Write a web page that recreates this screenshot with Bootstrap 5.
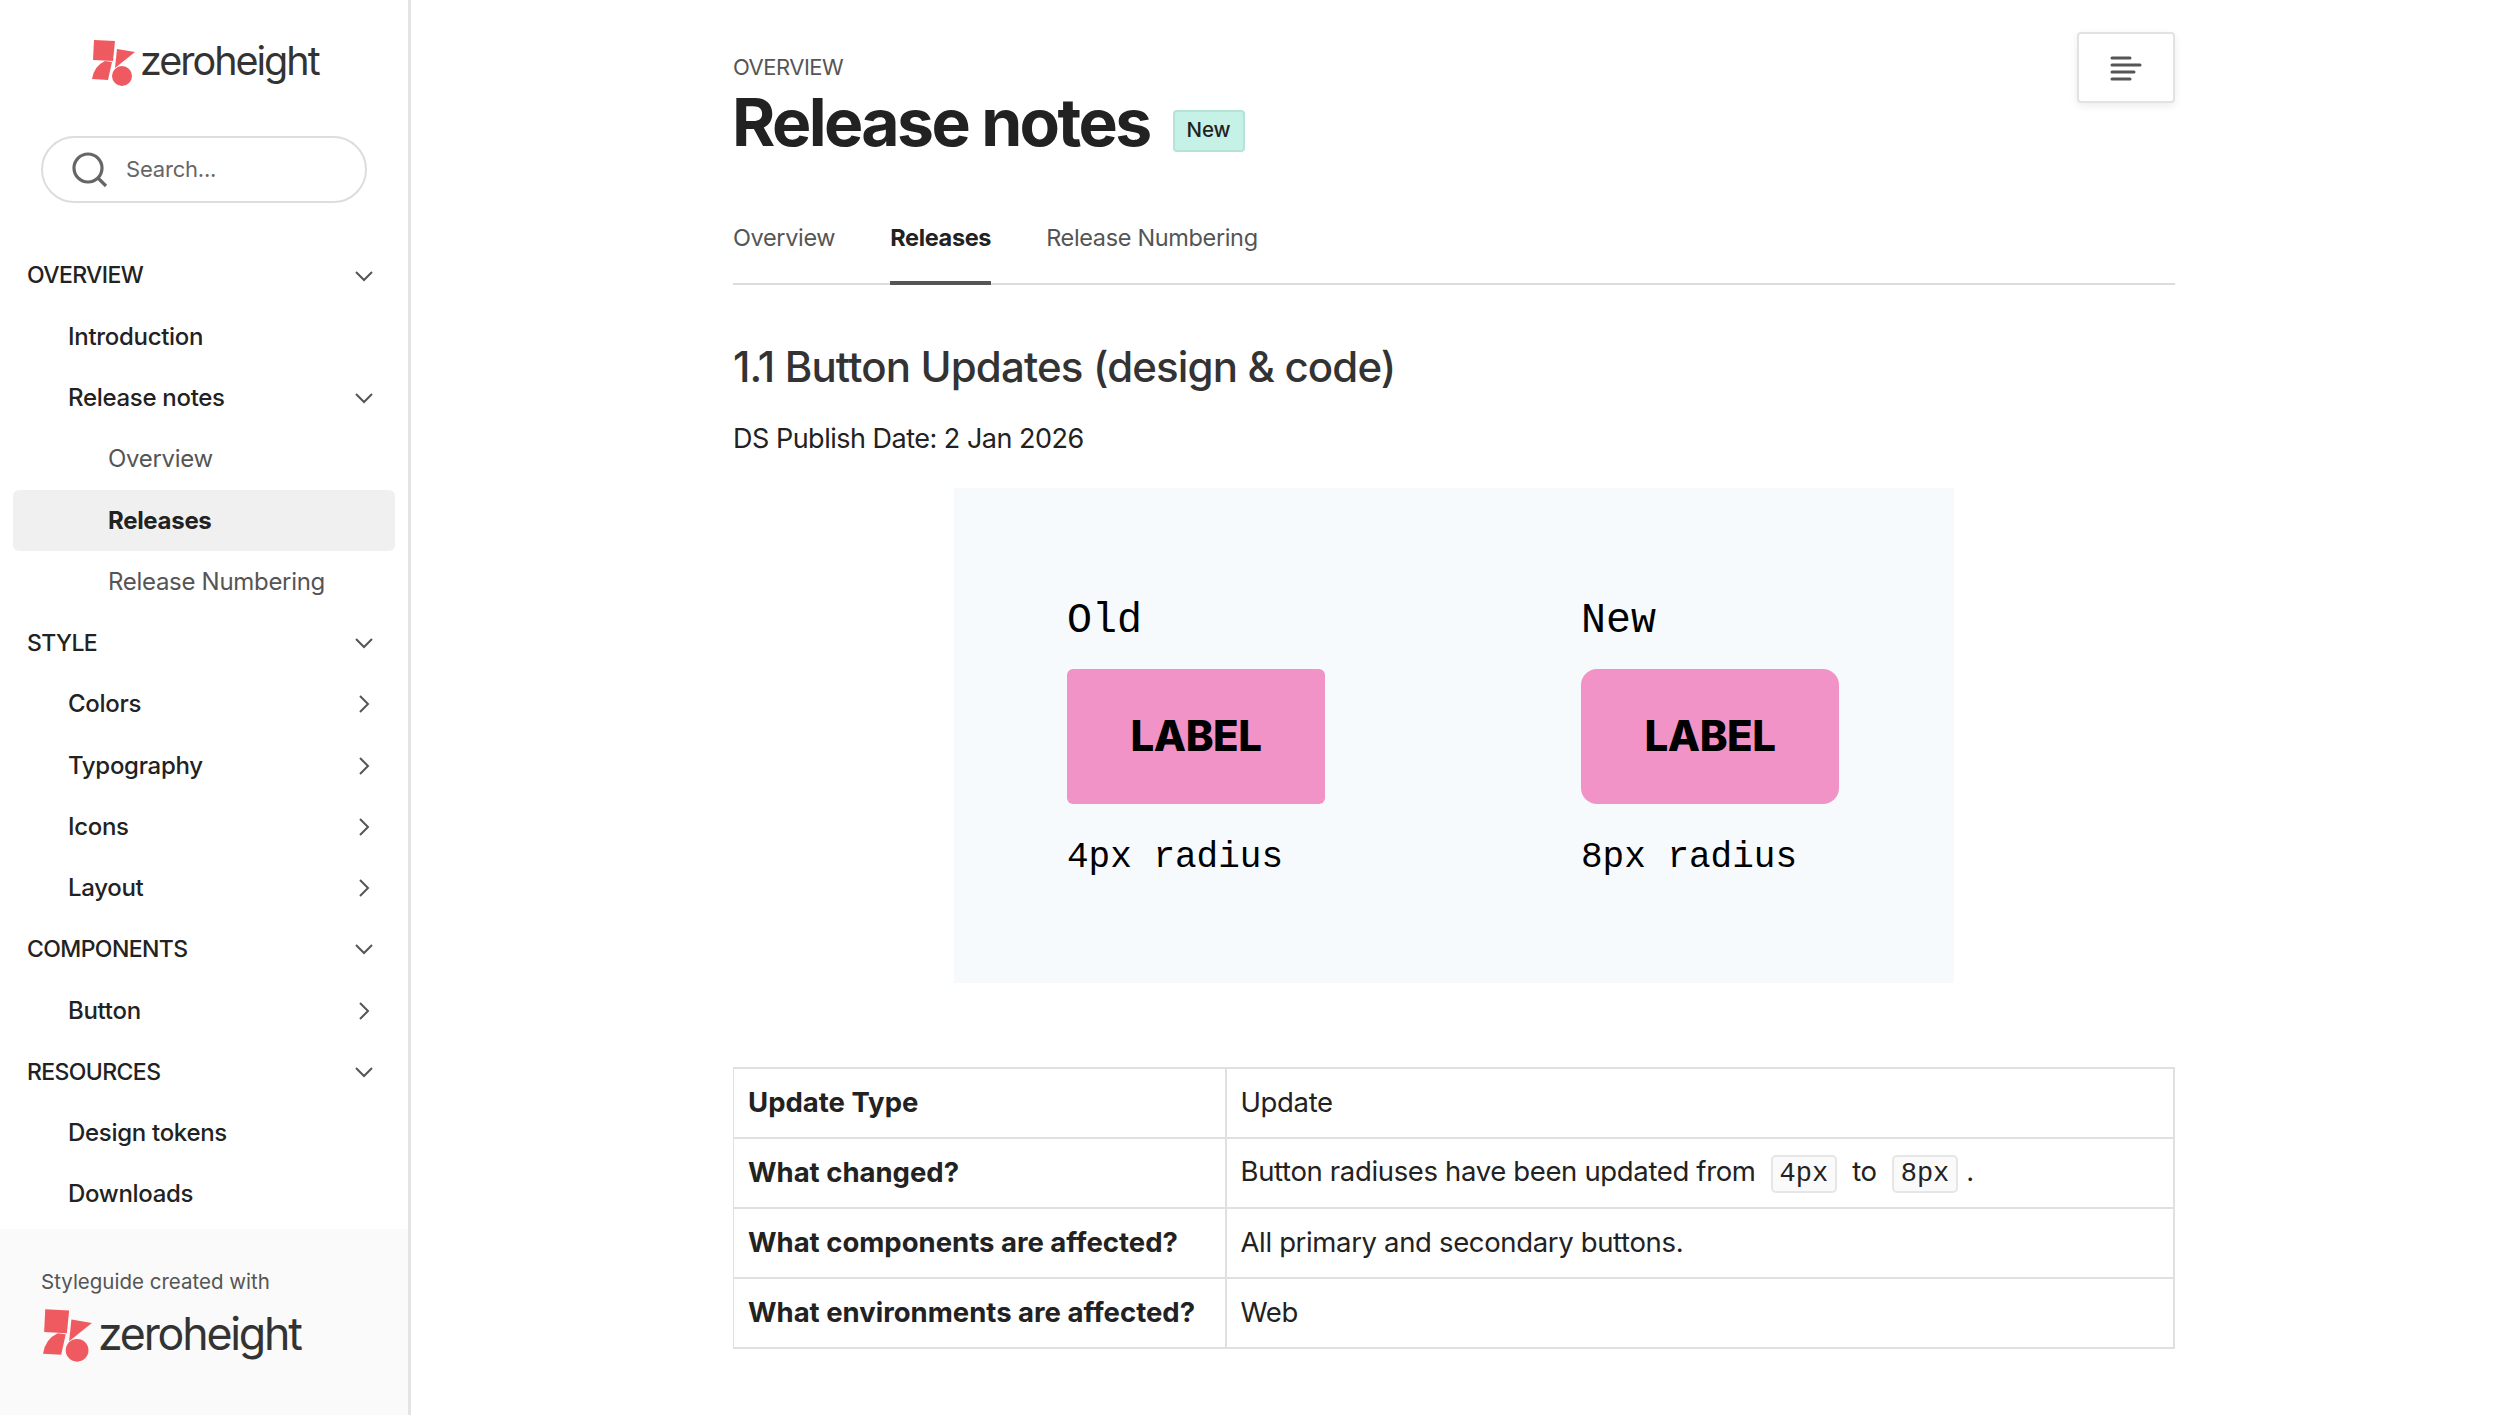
<!doctype html>
<html lang="en">
<head>
<meta charset="utf-8">
<title>Release notes</title>
<link href="https://cdn.jsdelivr.net/npm/bootstrap@5.3.0/dist/css/bootstrap.min.css" rel="stylesheet">
<style>
html{height:1415px;overflow:hidden}
body{font-family:"Inter","Liberation Sans",sans-serif;color:#222;background:#fff;height:1415px;overflow:hidden}
.zh-side{width:411px;height:1415px;border-right:3px solid #e4e4e4;flex:none}
.zh-logo{height:136px;padding:40px 0 0 92px;gap:4px}
.zh-word{font-family:"Inter",sans-serif;font-size:39.5px;font-weight:400;letter-spacing:-2px;line-height:42px;color:#333}
.zh-search{margin:0 41px 42px;height:67px;border:2px solid #ddd;border-radius:34px;padding-left:29px;gap:18px;color:#666;font-size:22px;letter-spacing:-.2px}
.zh-search svg{width:36px;height:36px;flex:none}
.zh-row{height:61.25px;margin:0 13px;padding:0 22px 0 14px;font-size:24px;letter-spacing:-.3px;color:#222;text-decoration:none;font-weight:500}
.zh-row svg{width:18px;height:18px;flex:none}
.zh-l0{font-weight:500;font-size:23px;letter-spacing:-.6px;color:#222}
.zh-l1{padding-left:55px}
.zh-l2{padding-left:95px;color:#555;font-weight:400}
.zh-on{background:#f0f0f0;border-radius:6px;color:#222;font-weight:700}
.zh-foot{background:#fafafa;margin-top:4px;padding:38px 0 0 41px;flex-grow:1}
.zh-foot p{font-size:20.5px;color:#555;margin:0 0 12px;line-height:30px;letter-spacing:0}
.zh-foot .zh-lockup{gap:5px;padding-left:2px}
.zh-foot .zh-word{font-size:44.7px;letter-spacing:-2.2px;line-height:50px}
.zh-main{width:1442px;margin-left:322px;flex:none}
.zh-head{height:185px;padding-top:32px}
.zh-eyebrow{font-size:22px;color:#555;line-height:28px;padding-top:21px;letter-spacing:-.5px}
.zh-title{font-size:66px;font-weight:700;letter-spacing:-2.6px;line-height:80px;margin:1px 0 0 -1px;color:#222}
.zh-badge{background:#c6f1e6;border:2px solid #b5e3d7;border-radius:4px;width:72px;height:42px;font-size:20.5px;font-weight:500;color:#222;margin:18px 0 0 23px}
.zh-menu{width:98px;height:71px;background:#fff;border:2px solid #e2e2e2;border-radius:4px;box-shadow:0 3px 8px rgba(0,0,0,.08);padding:0}
.zh-tabs{height:100px;border-bottom:2px solid #ddd;gap:55px}
.zh-tab{height:100px;padding:6px 0 0;font-size:23.5px;letter-spacing:-.35px;color:#555;display:flex;align-items:center;text-decoration:none}
.zh-tab-on{font-weight:700;color:#222;border-bottom:4px solid #555;margin-bottom:-2px;padding-top:10px}
.zh-h2{font-size:42px;font-weight:500;letter-spacing:-.85px;color:#333;line-height:52px;margin:56px 0 0}
.zh-date{font-size:27px;letter-spacing:-.5px;line-height:36px;margin:28px 0 31px}
.zh-panel{width:1000px;height:495px;background:#f7fafd;margin:0 auto 84px;padding:108px 0 0 113px;gap:256px;font-family:"Liberation Mono",monospace;color:#000}
.zh-col{width:258px}
.zh-cap{font-size:41.6px;line-height:50px;height:73px}
.zh-fake{width:258px;height:135px;background:#f293c7;font-family:"Inter",sans-serif;font-weight:800;font-size:42px;letter-spacing:-.5px;color:#000;padding-bottom:3px}
.zh-r4{border-radius:6px}
.zh-r8{border-radius:16px}
.zh-sub{font-size:36px;line-height:44px;margin-top:32px}
.zh-table{width:1442px;margin:0;font-size:27.5px;letter-spacing:-.35px;border-color:#ddd;--bs-table-color:#222}
.zh-table td{height:70px;padding:0 14px;vertical-align:middle;border-width:2px;border-color:#e0e0e0}
.zh-table td:first-child{width:492px;font-weight:700;letter-spacing:0;border-left-width:1px}
.zh-table td:last-child{border-left-width:1px}
.zh-code{font-family:"Liberation Mono",monospace;font-size:27px;color:#222;background:#fafafa;border:2px solid #e6e6e6;border-radius:5px;padding:2px 7px;margin:0 15px;letter-spacing:0}
.zh-code:last-child{margin-right:8px}
</style>
</head>
<body class="d-flex">
<aside class="zh-side d-flex flex-column">
  <div class="zh-logo d-flex align-items-start">
    <svg width="44" height="46" viewBox="92 40 44 46"><g fill="#ee5a5f"><path d="M94 40l21 1-2 20-20-1z"/><path d="M92 79q2-13 13-18l7 1-4 18z"/><path d="M117 49l18 3-20 16z"/><circle cx="122" cy="76" r="10"/></g></svg>
    <span class="zh-word">zeroheight</span>
  </div>
  <div class="zh-search d-flex align-items-center">
    <svg viewBox="0 0 36 36" fill="none" stroke="#666" stroke-width="3.2"><circle cx="16" cy="16" r="14"/><path d="M26 26l8 8"/></svg>
    <span>Search...</span>
  </div>
  <nav class="nav flex-column">
    <a class="zh-row zh-l0 d-flex align-items-center justify-content-between" href="#">OVERVIEW<svg viewBox="0 0 18 18" fill="none" stroke="#555" stroke-width="2"><path d="M1 5l8 8 8-8"/></svg></a>
    <a class="zh-row zh-l1 d-flex align-items-center justify-content-between" href="#">Introduction</a>
    <a class="zh-row zh-l1 d-flex align-items-center justify-content-between" href="#">Release notes<svg viewBox="0 0 18 18" fill="none" stroke="#555" stroke-width="2"><path d="M1 5l8 8 8-8"/></svg></a>
    <a class="zh-row zh-l2 d-flex align-items-center" href="#">Overview</a>
    <a class="zh-row zh-l2 zh-on d-flex align-items-center" href="#">Releases</a>
    <a class="zh-row zh-l2 d-flex align-items-center" href="#">Release Numbering</a>
    <a class="zh-row zh-l0 d-flex align-items-center justify-content-between" href="#">STYLE<svg viewBox="0 0 18 18" fill="none" stroke="#555" stroke-width="2"><path d="M1 5l8 8 8-8"/></svg></a>
    <a class="zh-row zh-l1 d-flex align-items-center justify-content-between" href="#">Colors<svg viewBox="0 0 18 18" fill="none" stroke="#555" stroke-width="2"><path d="M5 1l8 8-8 8"/></svg></a>
    <a class="zh-row zh-l1 d-flex align-items-center justify-content-between" href="#">Typography<svg viewBox="0 0 18 18" fill="none" stroke="#555" stroke-width="2"><path d="M5 1l8 8-8 8"/></svg></a>
    <a class="zh-row zh-l1 d-flex align-items-center justify-content-between" href="#">Icons<svg viewBox="0 0 18 18" fill="none" stroke="#555" stroke-width="2"><path d="M5 1l8 8-8 8"/></svg></a>
    <a class="zh-row zh-l1 d-flex align-items-center justify-content-between" href="#">Layout<svg viewBox="0 0 18 18" fill="none" stroke="#555" stroke-width="2"><path d="M5 1l8 8-8 8"/></svg></a>
    <a class="zh-row zh-l0 d-flex align-items-center justify-content-between" href="#">COMPONENTS<svg viewBox="0 0 18 18" fill="none" stroke="#555" stroke-width="2"><path d="M1 5l8 8 8-8"/></svg></a>
    <a class="zh-row zh-l1 d-flex align-items-center justify-content-between" href="#">Button<svg viewBox="0 0 18 18" fill="none" stroke="#555" stroke-width="2"><path d="M5 1l8 8-8 8"/></svg></a>
    <a class="zh-row zh-l0 d-flex align-items-center justify-content-between" href="#">RESOURCES<svg viewBox="0 0 18 18" fill="none" stroke="#555" stroke-width="2"><path d="M1 5l8 8 8-8"/></svg></a>
    <a class="zh-row zh-l1 d-flex align-items-center" href="#">Design tokens</a>
    <a class="zh-row zh-l1 d-flex align-items-center" href="#">Downloads</a>
  </nav>
  <div class="zh-foot">
    <p>Styleguide created with</p>
    <div class="zh-lockup d-flex align-items-start">
      <svg width="50" height="53" viewBox="92 40 44 46"><g fill="#ee5a5f"><path d="M94 40l21 1-2 20-20-1z"/><path d="M92 79q2-13 13-18l7 1-4 18z"/><path d="M117 49l18 3-20 16z"/><circle cx="122" cy="76" r="10"/></g></svg>
      <span class="zh-word">zeroheight</span>
    </div>
  </div>
</aside>
<main class="zh-main">
  <header class="zh-head d-flex justify-content-between align-items-start">
    <div>
      <div class="zh-eyebrow">OVERVIEW</div>
      <div class="d-flex align-items-center">
        <h1 class="zh-title">Release notes</h1>
        <span class="zh-badge d-flex align-items-center justify-content-center">New</span>
      </div>
    </div>
    <button class="btn zh-menu d-flex align-items-center justify-content-center" type="button" aria-label="Contents">
      <svg width="32" height="26" viewBox="0 0 32 26" stroke="#555" stroke-width="3" stroke-linecap="round"><path d="M2 3h18M2 10h28M2 17h22M2 24h18"/></svg>
    </button>
  </header>
  <div class="nav zh-tabs">
    <a class="zh-tab" href="#">Overview</a>
    <a class="zh-tab zh-tab-on" href="#">Releases</a>
    <a class="zh-tab" href="#">Release Numbering</a>
  </div>
  <h2 class="zh-h2">1.1 Button Updates (design &amp; code)</h2>
  <p class="zh-date">DS Publish Date: 2 Jan 2026</p>
  <div class="zh-panel d-flex">
    <div class="zh-col">
      <div class="zh-cap">Old</div>
      <div class="zh-fake zh-r4 d-flex align-items-center justify-content-center">LABEL</div>
      <div class="zh-sub">4px radius</div>
    </div>
    <div class="zh-col">
      <div class="zh-cap">New</div>
      <div class="zh-fake zh-r8 d-flex align-items-center justify-content-center">LABEL</div>
      <div class="zh-sub">8px radius</div>
    </div>
  </div>
  <table class="table table-bordered zh-table">
    <tbody>
      <tr><td>Update Type</td><td>Update</td></tr>
      <tr><td>What changed?</td><td>Button radiuses have been updated from<code class="zh-code">4px</code>to<code class="zh-code">8px</code>.</td></tr>
      <tr><td>What components are affected?</td><td>All primary and secondary buttons.</td></tr>
      <tr><td>What environments are affected?</td><td>Web</td></tr>
    </tbody>
  </table>
</main>
<script src="https://cdn.jsdelivr.net/npm/bootstrap@5.3.0/dist/js/bootstrap.bundle.min.js"></script>
</body>
</html>
